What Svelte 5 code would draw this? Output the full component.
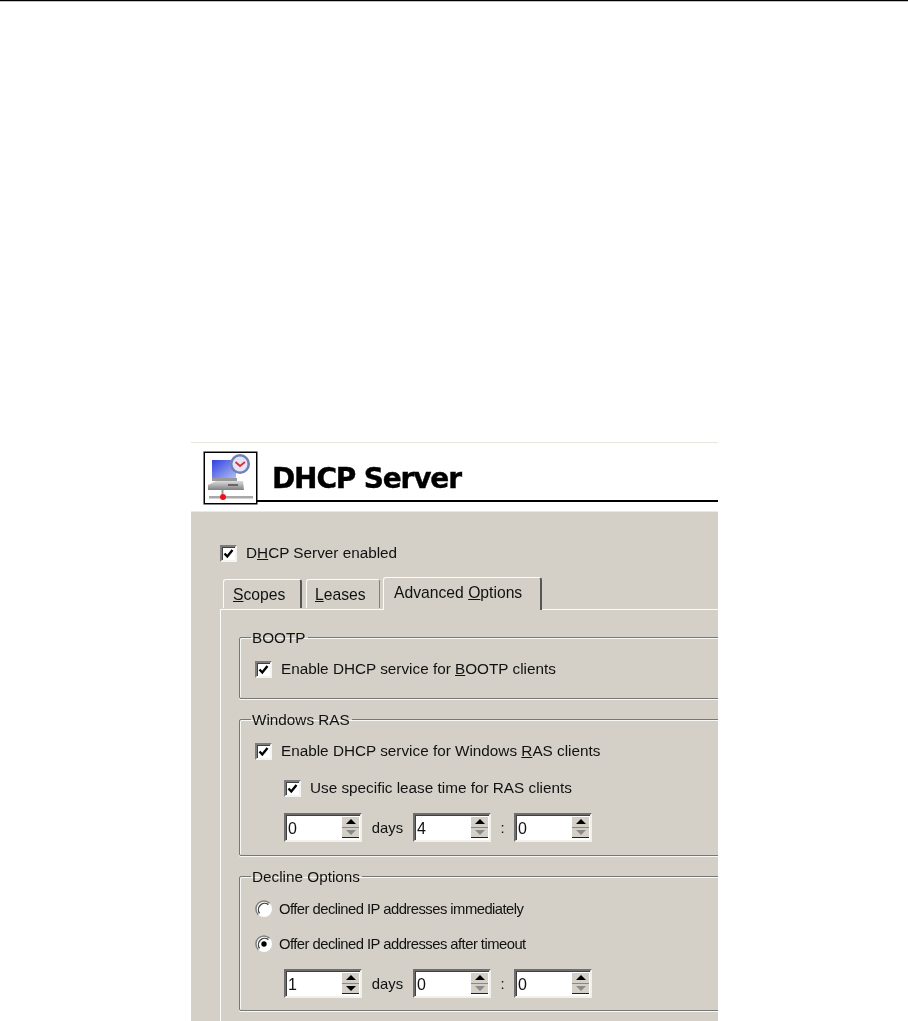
<script>
  const first = [
    { value: '0', downOff: true },
    { value: '4', downOff: true },
    { value: '0', downOff: true }
  ];
  const second = [
    { value: '1', downOff: false },
    { value: '0', downOff: true },
    { value: '0', downOff: true }
  ];
</script>

{#snippet check()}
  <span class="check">
    <svg width="11" height="11" viewBox="0 0 11 11"><path d="M1.5 5.5 L4.3 8.5 L9.5 2" fill="none" stroke="#000" stroke-width="2.4" /></svg>
  </span>
{/snippet}

{#snippet radio(on)}
  <svg class="radio" width="18" height="18" viewBox="0 0 18 18">
    <circle cx="9" cy="9" r="8" fill="#fff" />
    <path d="M3.3 14.7 A8 8 0 0 1 14.7 3.3" fill="none" stroke="#808080" stroke-width="1.5" />
    <path d="M4.6 13.4 A6.3 6.3 0 0 1 13.4 4.6" fill="none" stroke="#404040" stroke-width="1.3" />
    {#if on}<circle cx="9" cy="9" r="2.7" fill="#000" />{/if}
  </svg>
{/snippet}

{#snippet spin(item)}
  <span class="spin">
    <span class="spin-value">{item.value}</span>
    <span class="spin-buttons">
      <span class="spin-btn"><i class="up"></i></span>
      <span class="spin-btn"><i class="down" class:off={item.downOff}></i></span>
    </span>
  </span>
{/snippet}

{#snippet spinRow(items)}
  <div class="spin-row">
    {@render spin(items[0])}
    <span class="days">days</span>
    {@render spin(items[1])}
    <span class="colon">:</span>
    {@render spin(items[2])}
  </div>
{/snippet}

<div class="page">
  <div class="rule"></div>
  <div class="window">
    <header class="head">
      <div class="icon">
        <svg width="50" height="48" viewBox="0 0 50 48">
          <defs>
            <linearGradient id="screen" x1="0" y1="0" x2="1" y2="1">
              <stop offset="0" stop-color="#3040e0" />
              <stop offset="1" stop-color="#b0bcf4" />
            </linearGradient>
            <linearGradient id="base" x1="0" y1="0" x2="0" y2="1">
              <stop offset="0" stop-color="#dcdcdc" />
              <stop offset="1" stop-color="#808080" />
            </linearGradient>
          </defs>
          <rect x="6" y="6" width="24" height="18" fill="url(#screen)" />
          <rect x="6" y="24" width="25" height="3" fill="#999" />
          <path d="M2 31 L10 27 H37 L38 36 H2 Z" fill="url(#base)" />
          <rect x="22" y="30" width="10" height="2" fill="#666" />
          <rect x="15.5" y="36" width="2" height="7" fill="#999" />
          <rect x="3" y="42" width="44" height="2.5" fill="#a8a8a8" />
          <circle cx="34" cy="10" r="10" fill="#7480b4" />
          <circle cx="34" cy="10" r="7.5" fill="#e4e4f8" />
          <path d="M29.5 8 L34 12 L39 8" fill="none" stroke="#d8303c" stroke-width="1.8" />
          <circle cx="17" cy="43" r="3" fill="#f0101c" />
        </svg>
      </div>
      <div class="title">
        <h1>DHCP Server</h1>
      </div>
    </header>

    <div class="body">
      <label class="row top-check">
        {@render check()}
        <span>D<u>H</u>CP Server enabled</span>
      </label>

      <div class="tabs">
        <div class="tab scopes"><u>S</u>copes</div>
        <div class="tab leases"><u>L</u>eases</div>
        <div class="tab active">Advanced <u>O</u>ptions</div>
      </div>

      <div class="panel">
        <fieldset class="bootp">
          <legend>BOOTP</legend>
          <label class="row">
            {@render check()}
            <span>Enable DHCP service for <u>B</u>OOTP clients</span>
          </label>
        </fieldset>

        <fieldset class="ras">
          <legend>Windows RAS</legend>
          <label class="row">
            {@render check()}
            <span>Enable DHCP service for Windows <u>R</u>AS clients</span>
          </label>
          <label class="row sub">
            {@render check()}
            <span>Use specific lease time for RAS clients</span>
          </label>
          {@render spinRow(first)}
        </fieldset>

        <fieldset class="decline">
          <legend>Decline Options</legend>
          <div class="row radio-row">
            {@render radio(false)}
            <span>Offer declined IP addresses immediately</span>
          </div>
          <div class="row radio-row second-radio">
            {@render radio(true)}
            <span>Offer declined IP addresses after timeout</span>
          </div>
          {@render spinRow(second)}
        </fieldset>
      </div>
    </div>
  </div>
</div>

<style>
  :global(body) {
    background: #fff;
  }

  .page {
    height: 1021px;
    overflow: hidden;
    font-family: "Liberation Sans", Arial, sans-serif;
    font-size: 15.3px;
    color: #111;
  }

  .rule {
    height: 1px;
    background: #000;
    border-bottom: 1px solid #c4c4c4;
    margin-bottom: 440px;
  }

  .window {
    width: 527px;
    height: 579px;
    margin-left: 191px;
    overflow: hidden;
    filter: blur(0.6px);
  }

  .head {
    height: 69px;
    box-sizing: border-box;
    border-top: 1px solid #e8e5de;
    padding: 9px 0 0 13px;
    display: flex;
    align-items: flex-start;
    background: #fff;
  }

  .icon {
    width: 51px;
    height: 50px;
    border: 1px solid #000;
    box-shadow: 0 0 0 0.6px #333;
    flex: none;
  }

  .icon svg {
    display: block;
    margin: 1px 0 0 1px;
    filter: blur(0.5px);
  }

  .title {
    flex: 1;
    height: 50px;
    box-sizing: border-box;
    border-bottom: 2px solid #000;
  }

  h1 {
    margin: 0;
    padding: 11px 0 0 15px;
    font-family: "DejaVu Sans", sans-serif;
    font-size: 28px;
    line-height: 32px;
    font-weight: 700;
    color: #000;
    letter-spacing: -1.15px;
    -webkit-text-stroke: 0.4px #000;
  }

  .body {
    height: 510px;
    box-sizing: border-box;
    background: #d4d0c8;
    border-top: 1px solid #ebe9e3;
    padding: 32px 0 0 29px;
  }

  .row {
    display: flex;
    align-items: center;
    gap: 9px;
    height: 18px;
    padding-left: 15px;
    white-space: nowrap;
  }

  .top-check {
    padding-left: 0;
  }

  .check {
    width: 17px;
    height: 17px;
    box-sizing: border-box;
    flex: none;
    background: #fff;
    border: 2px solid;
    border-color: #7c7c7c #f4f4f0 #f4f4f0 #7c7c7c;
    box-shadow: inset 1px 1px 0 #404040;
    display: flex;
    align-items: center;
    justify-content: center;
  }

  .radio {
    flex: none;
  }

  .radio-row {
    gap: 6px;
    font-size: 14.8px;
    letter-spacing: -0.53px;
  }

  .tabs {
    display: flex;
    align-items: flex-end;
    margin: 14px 0 0 3px;
    height: 33px;
    position: relative;
    z-index: 1;
    font-size: 15.7px;
  }

  .tab {
    box-sizing: border-box;
    height: 29px;
    background: #d4d0c8;
    border: solid #fbfbf8;
    border-width: 1.5px 0 0 1.5px;
    border-radius: 3px 3px 0 0;
    line-height: 27px;
    margin-bottom: 1px;
    white-space: nowrap;
  }

  .scopes {
    width: 79px;
    border-right: 2px solid #555;
    margin-right: 4px;
    padding: 1px 0 0 9px;
  }

  .leases {
    width: 74px;
    border-right: 1.5px solid #808080;
    margin-right: 3px;
    padding: 1px 0 0 8px;
  }

  .active {
    width: 159px;
    height: 33px;
    margin-bottom: -1px;
    border-right: 2px solid #555;
    line-height: 29px;
    padding-left: 10px;
  }

  .panel {
    width: 600px;
    margin-left: 0;
    border-top: 1.5px solid #fbfbf8;
    border-left: 1.5px solid #fbfbf8;
    height: 420px;
    padding: 19px 0 0 18px;
    box-sizing: border-box;
  }

  fieldset {
    margin: 0 0 12px;
    padding: 0;
    border: 1px solid #777;
    border-radius: 2px;
    box-shadow: 0 1px 0 #f8f8f4, inset 1px 1px 0 #f8f8f4;
    min-width: 0;
  }

  legend {
    margin-left: 11px;
    padding: 0 2px 0 1px;
    height: 17px;
    line-height: 17px;
  }

  .bootp {
    height: 70px;
    box-sizing: border-box;
    padding-top: 14px;
  }

  .ras {
    padding-top: 14px;
    height: 145px;
    box-sizing: border-box;
  }

  .decline {
    padding-top: 15px;
    height: 143px;
    box-sizing: border-box;
  }

  .sub {
    margin-top: 19px;
    padding-left: 44px;
  }

  .second-radio {
    margin-top: 17px;
  }

  .spin-row {
    display: flex;
    align-items: center;
    height: 29px;
    padding-left: 44px;
    margin-top: 16px;
    color: #111;
    font-size: 14.8px;
  }

  .spin {
    width: 78px;
    height: 29px;
    box-sizing: border-box;
    flex: none;
    background: #fff;
    border: 2px solid;
    border-color: #6e6e6e #f2f0ea #f2f0ea #6e6e6e;
    box-shadow: inset 1px 1px 0 #404040;
    display: flex;
    justify-content: space-between;
    padding: 2px 1px 2px 2px;
  }

  .spin-value {
    line-height: 23px;
    font-size: 16px;
  }

  .spin-buttons {
    width: 17px;
    display: flex;
    flex-direction: column;
    border-bottom: 1.5px solid #222;
    background: #d4d0c8;
  }

  .spin-btn {
    flex: 1;
    display: flex;
    align-items: center;
    justify-content: center;
    border-bottom: 1px solid #888;
    background: #d4d0c8;
  }

  .spin-btn:last-child {
    border-bottom: 0;
  }

  .up,
  .down {
    width: 0;
    height: 0;
    border-left: 5px solid transparent;
    border-right: 5px solid transparent;
  }

  .up {
    border-bottom: 5px solid #000;
  }

  .down {
    border-top: 5px solid #000;
  }

  .down.off {
    border-top-color: #8a8a8a;
  }

  .days {
    width: 51px;
    text-align: center;
  }

  .colon {
    width: 23px;
    text-align: center;
  }
</style>
